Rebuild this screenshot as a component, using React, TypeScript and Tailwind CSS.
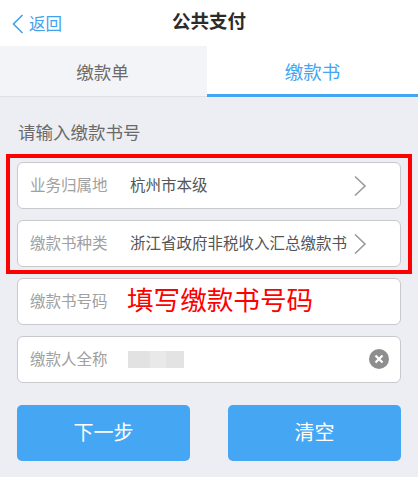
const cjk = "font-['Liberation_Sans','Noto_Sans_CJK_SC',sans-serif]";

function Chevron() {
  return (
    <svg width="14" height="22" viewBox="0 0 14 22" fill="none" className="shrink-0">
      <path d="M2 1.5L12 11L2 20.5" stroke="#9a9a9a" strokeWidth="1.6" />
    </svg>
  );
}

function FormRow({ label, children }: { label: string; children?: React.ReactNode }) {
  return (
    <div className="flex h-[47px] items-center rounded-[6px] border border-[#c9c9cd] bg-white pl-[12px] pr-[33px]">
      <span className="w-[100px] shrink-0 text-[15.5px] text-[#a0a0a0]">{label}</span>
      {children}
    </div>
  );
}

export default function App() {
  return (
    <div className={`relative h-[477px] w-[418px] overflow-hidden bg-[#eceef4] ${cjk}`}>
      <div className="relative flex h-[46px] items-center justify-center bg-white pb-[2px]">
        <div className="absolute left-[12px] top-[12px] flex items-center gap-[5px]">
          <svg width="12" height="20" viewBox="0 0 12 20" fill="none">
            <path d="M10.5 1L1.5 10L10.5 19" stroke="#3fa2ee" strokeWidth="1.6" />
          </svg>
          <span className="text-[16.5px] text-[#3fa2ee]">返回</span>
        </div>
        <span className="text-[18.5px] font-bold text-[#2b2b2b]">公共支付</span>
      </div>

      <div className="flex h-[51px] border-b border-[#dfe0e4]">
        <div className="flex w-[207px] items-center justify-center bg-[#f3f4f8] pt-[4px] pr-[2px] text-[17.5px] text-[#6b6b6b]">
          缴款单
        </div>
        <div className="-mb-px flex flex-1 items-center justify-center border-b-[3px] border-[#44a5f2] bg-white pt-[5px] text-[18.5px] text-[#44a5f2]">
          缴款书
        </div>
      </div>

      <div className="px-[17px]">
        <div className="ml-px pt-[24px] text-[17.5px] leading-[24px] text-[#6a6a6a]">请输入缴款书号</div>

        <div className="mt-[17px] flex flex-col gap-[11px]">
          <FormRow label="业务归属地">
            <span className="flex-1 text-[15.5px] text-[#555555]">杭州市本级</span>
            <Chevron />
          </FormRow>
          <FormRow label="缴款书种类">
            <span className="flex-1 whitespace-nowrap text-[15.5px] text-[#555555]">浙江省政府非税收入汇总缴款书</span>
            <Chevron />
          </FormRow>
          <FormRow label="缴款书号码" />
          <div className="flex h-[47px] items-center rounded-[6px] border border-[#c9c9cd] bg-white pl-[12px] pr-[11px]">
            <span className="w-[98px] shrink-0 text-[15.5px] text-[#a0a0a0]">缴款人全称</span>
            <div className="flex h-[17px] w-[56px]">
              <div className="w-[22px] bg-[#e2e2e2]" />
              <div className="w-[16px] bg-[#e9e9e9]" />
              <div className="w-[18px] bg-[#e3e3e3]" />
            </div>
            <div className="mb-[2px] ml-auto flex h-[20px] w-[20px] items-center justify-center rounded-full bg-[#8e8e8e]">
              <svg width="10" height="10" viewBox="0 0 10 10" fill="none">
                <path d="M1.5 1.5L8.5 8.5M8.5 1.5L1.5 8.5" stroke="white" strokeWidth="2.2" />
              </svg>
            </div>
          </div>
        </div>

        <div className="mt-[22px] flex justify-between">
          <button className="flex h-[56px] w-[173px] items-center justify-center rounded-[5px] bg-[#45a6f3] text-[20px] text-white">
            下一步
          </button>
          <button className="flex h-[56px] w-[173px] items-center justify-center rounded-[5px] bg-[#45a6f3] text-[20px] text-white">
            清空
          </button>
        </div>
      </div>

      {/* annotation drawn on top of the screenshot */}
      <div className="absolute left-[6px] top-[154px] h-[120px] w-[406px] border-[4px] border-[#fe0000]" />
      <div className="absolute left-[127px] top-[284px] text-[26.6px] leading-[34px] text-[#fe0000]">填写缴款书号码</div>
    </div>
  );
}
